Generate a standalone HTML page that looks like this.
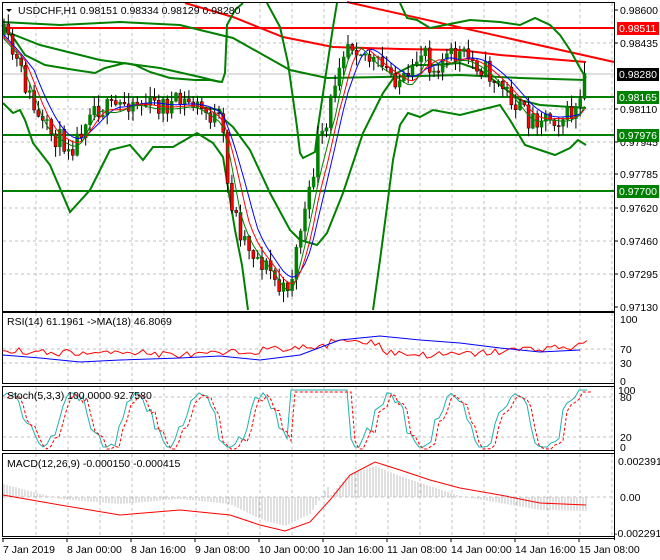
<!DOCTYPE html><html><head><style>
body{margin:0;background:#fff;width:660px;height:560px;overflow:hidden}
svg{display:block}
text{font-family:"Liberation Sans",sans-serif;font-size:10.5px;fill:#000}
</style></head><body>
<svg id="s" width="660" height="560" xmlns="http://www.w3.org/2000/svg"></svg>
<script>
const s=document.getElementById('s');let h='';
const R=614;
function L(x1,y1,x2,y2,c,w,d){h+=`<line x1="${x1}" y1="${y1}" x2="${x2}" y2="${y2}" stroke="${c}" stroke-width="${w||1}" ${d?'stroke-dasharray="3,3"':''}/>`}
function P(pts,c,w,d){h+=`<polyline fill="none" stroke="${c}" stroke-width="${w||1}" ${d?'stroke-dasharray="3,2"':''} points="${pts.map(p=>p.join(',')).join(' ')}"/>`}
function T(x,y,t,fill,bg,bw){if(bg)h+=`<rect x="${x-2}" y="${y-10}" width="${bw||42}" height="13" fill="${bg}"/>`;h+=`<text x="${x}" y="${y}" ${fill?`style="fill:${fill}"`:''}>${t}</text>`}
function interp(k,x){for(let i=0;i<k.length-1;i++){if(x>=k[i][0]&&x<=k[i+1][0]){const t=(x-k[i][0])/(k[i+1][0]-k[i][0]);return k[i][1]+t*(k[i+1][1]-k[i][1]);}}return k[k.length-1][1]}
let seed=11;function rnd(){seed=(seed*16807)%2147483647;return seed/2147483647}
const panels=[[2,312],[312,384],[386,451],[453,537]];
for(let x=36;x<R;x+=32){for(const p of panels)L(x,p[0]+1,x,p[1]-1,'#c0c0c0',1,1)}
for(const y of [43,74,109,142,174,208,241,274]) L(3,y,R,y,'#c0c0c0',1,1);
for(const y of [349,363]) L(3,y,R,y,'#c0c0c0',1,1);
for(const y of [397,437]) L(3,y,R,y,'#c0c0c0',1,1);
L(3,497,R,497,'#c0c0c0',1,1);
L(3,28,R,28,'#ff0000',2);L(3,97,R,97,'#008000',2);L(3,135,R,135,'#008000',2);L(3,191,R,191,'#008000',2);
L(3,74,R,74,'#c0c0c0',1);
const K=[[4,35],[20,70],[40,125],[60,140],[75,145],[90,105],[110,110],[130,100],[150,105],[170,105],[190,102],[210,115],[222,125],[228,190],[240,230],[255,255],[270,270],[282,295],[292,275],[300,230],[310,195],[318,140],[325,140],[332,95],[340,55],[348,40],[358,45],[370,60],[385,70],[400,80],[410,85],[418,55],[425,45],[432,70],[440,60],[460,55],[480,65],[490,75],[500,85],[510,95],[520,110],[530,120],[540,115],[560,118],[570,115],[580,105],[586,75]];
// MA red curve & trend line
P([[185,3],[233,17],[283,37],[333,47],[400,49],[460,50],[500,55],[586,62]],'#ff0000',2);
P([[347,2],[614,62]],'#ff0000',2);
// middle band / long MA
P([[2,22],[60,25],[120,22],[180,25],[200,30],[233,38],[290,70],[327,78],[383,77],[460,75],[520,78],[586,80]],'#008000',2);
P([[2,30],[40,45],[100,60],[160,68],[200,77],[220,82]],'#008000',2);
// upper band
P([[2,25],[15,40],[25,55],[45,65],[75,70],[95,73],[105,68],[125,63],[135,65],[150,72],[170,78],[195,80],[210,80],[222,82],[225,73],[227,25],[235,10],[243,3]],'#008000',2);
P([[267,3],[280,27],[288,63],[297,127],[300,153],[303,158],[315,152],[318,127],[327,67],[333,27],[337,3]],'#008000',2);
P([[400,3],[407,18],[417,20],[430,28],[460,22],[470,20],[500,22],[520,25],[535,18],[550,25],[560,35],[570,50],[580,68],[586,78]],'#008000',2);
// lower band
P([[3,103],[13,113],[20,110],[25,120],[33,143],[50,165],[70,212],[90,190],[110,150],[130,145],[143,160],[153,147],[173,147],[197,133],[213,143],[223,157],[235,230],[242,265],[248,310]],'#008000',2);
P([[373,310],[380,260],[387,207],[393,160],[400,125],[408,113],[420,117],[433,110],[460,115],[480,110],[500,105],[510,120],[525,145],[540,150],[555,155],[570,148],[578,140],[586,145]],'#008000',2);
// band that rises through middle
P([[200,107],[220,110],[225,120],[233,127],[250,150],[270,193],[290,230],[300,240],[317,245],[327,233],[343,193],[363,133],[383,93],[397,73],[413,65],[433,65],[460,63],[480,70],[500,85],[520,100],[540,105],[586,108]],'#008000',2);
// candles
let prev=interp(K,4);const closes=[];
for(let x=4;x<=586;x+=4.3){const c=interp(K,x)+(rnd()-0.5)*22;const o=prev;const hi=Math.min(o,c)-rnd()*10-1,lo=Math.max(o,c)+rnd()*10+1;
L(x,hi,x,lo,'#000',1);const bull=c<o;const top=Math.min(o,c),ht=Math.max(Math.abs(c-o),1);
h+=`<rect x="${x-1.5}" y="${top}" width="3" height="${ht}" fill="${bull?'#008000':'#ff0000'}" stroke="${bull?'#008000':'#000'}" stroke-width="0.5"/>`;prev=c;closes.push([x,interp(K,x)]);}
const ma=(n,off)=>closes.map((p,i)=>{let a=0,c=0;for(let j=Math.max(0,i-n);j<=i;j++){a+=closes[j][1];c++}return [p[0],a/c+off]});
P(ma(7,0),'#0000ff',1);P(ma(5,2),'#ff0000',1);P(ma(3,4),'#008000',1);
// RSI
const rsi=[];
for(let x=3;x<=590;x+=4){const v=48+(rnd()-0.5)*12+Math.sin(x/40)*6+(x>330&&x<380?14:0)+(x>20&&x<110?-8:0)+(x>575?10:0);rsi.push([x,381-v*0.62]);}
P(rsi,'#ff0000',1);
P([[3,355],[40,358],[80,362],[120,360],[180,358],[220,356],[260,360],[300,355],[340,340],[380,336],[420,340],[460,343],[500,348],[540,352],[580,350]],'#0000ff',1);
// Stoch
const st=[];
for(let x=3;x<=590;x+=4){let v=45+50*Math.sin(x/10+rnd()*0.8);if(x>290&&x<350)v=100;if(x>575)v=100;v=Math.max(0,Math.min(100,v));st.push([x,447-v*0.57]);}
P(st,'#20b2aa',1);P(st.map((p,i)=>[p[0]+4,p[1]+2]),'#ff0000',1,1);
// MACD
const mk=[[3,490],[60,505],[120,510],[180,505],[230,510],[260,525],[285,532],[310,520],[330,490],[350,468],[375,460],[400,470],[430,480],[460,490],[500,497],[540,504],[586,505]];
for(let x=4;x<=586;x+=3){const y=interp(mk,x)+(x<330?-6:6);L(x,497,x,y,'#c0c0c0',1)}
P([[3,495],[60,505],[120,515],[180,510],[230,515],[260,525],[285,531],[310,522],[330,500],[350,475],[375,462],[400,470],[430,480],[460,488],[500,495],[540,503],[586,505]],'#ff0000',1);
for(const p of panels)h+=`<rect x="2.5" y="${p[0]+.5}" width="${R-2}" height="${p[1]-p[0]-1}" fill="none" stroke="#000"/>`;
L(R+.5,2,R+.5,540,'#000');L(2,538.5,R,538.5,'#000');
const pl=[[10,'0.98600'],[43,'0.98435'],[109,'0.98110'],[142,'0.97945'],[174,'0.97785'],[208,'0.97620'],[241,'0.97460'],[274,'0.97295'],[307,'0.97130']];
for(const [y,t] of pl){L(R,y,R+4,y,'#000');T(620,y+4,t)}
T(619,32,'0.98511','#fff','#ff0000');T(619,78,'0.98280','#fff','#000');T(619,101,'0.98165','#fff','#008000');T(619,139,'0.97976','#fff','#008000');T(619,195,'0.97700','#fff','#008000');
T(620,323,'100');T(620,353,'70');T(620,367,'30');T(620,385,'0');
T(618,394,'100');T(620,401,'80');T(620,441,'20');T(620,451,'0');
T(618,465,'0.002391');T(620,501,'0.00');T(614,537,'-0.002291');
h+=`<polygon points="6,9 12,9 9,12" fill="#000"/>`;
T(18,14,'USDCHF,H1  0.98151 0.98334 0.98129 0.98280');
T(7,325,'RSI(14) 61.1961  -&gt;MA(18) 46.8069');T(7,399,'Stoch(5,3,3) 100.0000 92.7580');T(7,467,'MACD(12,26,9) -0.000150 -0.000415');
const tl=[[3,'7 Jan 2019'],[67,'8 Jan 00:00'],[131,'8 Jan 16:00'],[195,'9 Jan 08:00'],[259,'10 Jan 00:00'],[323,'10 Jan 16:00'],[387,'11 Jan 08:00'],[451,'14 Jan 00:00'],[515,'14 Jan 16:00'],[579,'15 Jan 08:00']];
for(const [x,t] of tl){L(x,538,x,542,'#000');T(x,553,t)}
s.innerHTML=h;
</script></body></html>
